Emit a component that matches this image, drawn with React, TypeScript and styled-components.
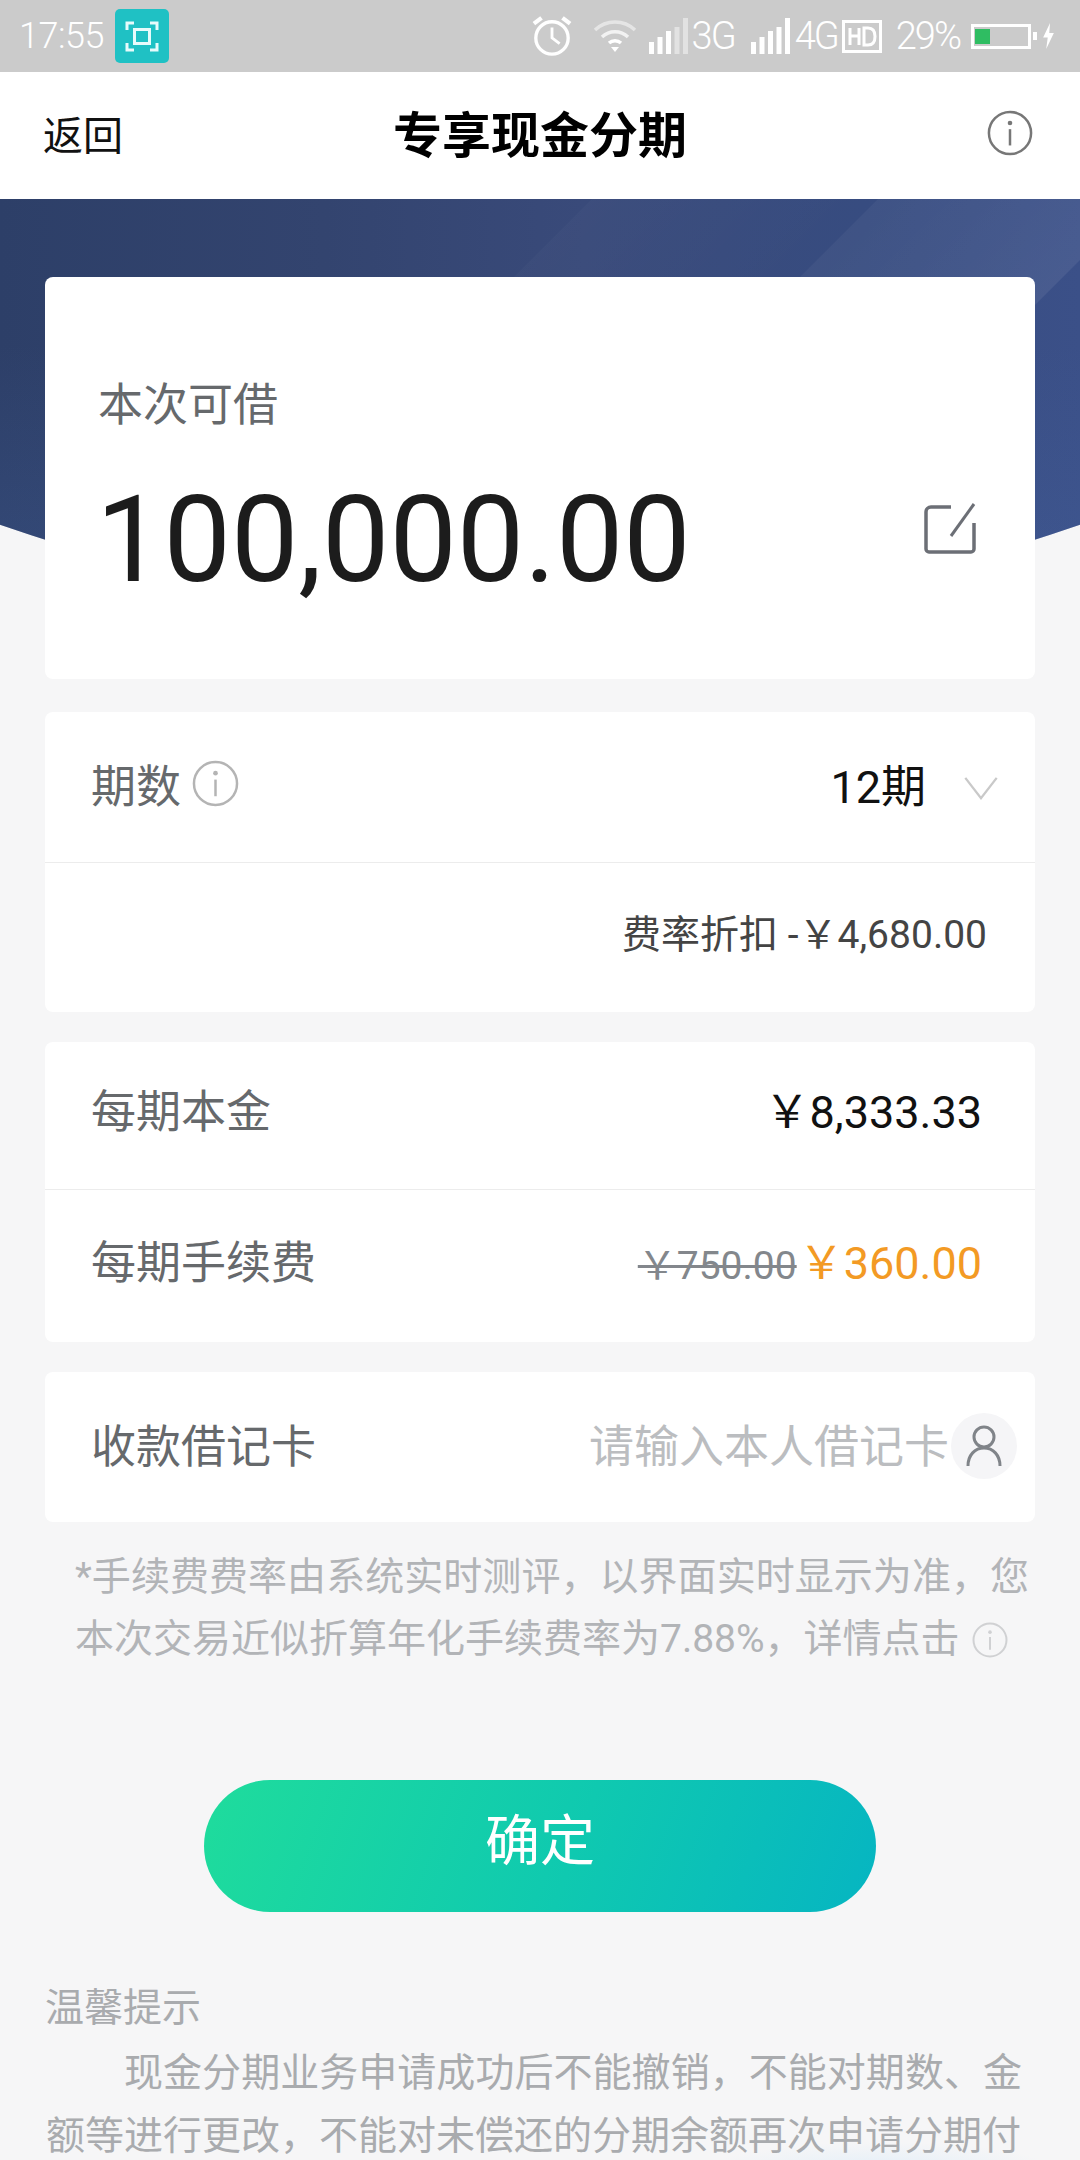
import styled, { createGlobalStyle } from 'styled-components'

const Global = createGlobalStyle`
    html, body {
        margin: 0;
        padding: 0;
        background: #f6f6f7;
    }
    * {
        box-sizing: border-box;
    }
`

const Page = styled.div`
    position: relative;
    width: 1080px;
    height: 2160px;
    overflow: hidden;
    background: radial-gradient(ellipse 170px 26px at 880px 2168px, #e4eff8, rgba(228, 239, 248, 0)), #f6f6f7;
    font-family: Roboto, "Noto Sans CJK SC", sans-serif;
`

const StatusBar = styled.div`
    height: 72px;
    background: #cbcbcb;
    display: flex;
    align-items: center;
    padding: 0 25px 0 19px;
    color: #fff;
`

const Clock = styled.span`
    font-size: 36px;
    font-weight: 300;
    letter-spacing: -0.5px;
`

const ScanBadge = styled.div`
    width: 54px;
    height: 54px;
    margin-left: 11px;
    border-radius: 5px;
    background: #1fc1c4;
    display: flex;
    align-items: center;
    justify-content: center;
`

const StatusRight = styled.div`
    margin-left: auto;
    display: flex;
    align-items: center;
`

const StatusIcon = styled.svg<{ $ml?: number }>`
    display: block;
    flex: none;
    margin-left: ${props => props.$ml || 0}px;
`

const NetLabel = styled.span<{ $ml: number }>`
    margin-left: ${props => props.$ml}px;
    font-size: 38px;
    line-height: 1;
    font-weight: 300;
    letter-spacing: -2px;
`

const Percent = styled.span`
    margin: 0 11px 0 14px;
    font-size: 38px;
    line-height: 1;
    font-weight: 300;
    letter-spacing: -2px;
`

const NavBar = styled.div`
    height: 127px;
    background: #fff;
    display: flex;
    align-items: center;
    justify-content: space-between;
    padding: 0 47px 5px 43px;
    position: relative;
    z-index: 1;
`

const BackLink = styled.span`
    font-size: 40px;
    color: #111;
    width: 120px;
`

const Title = styled.h1`
    margin: 0 0 3px 4px;
    font-size: 49px;
    font-weight: 700;
    color: #000;
`

const NavAction = styled.div`
    width: 120px;
    display: flex;
    justify-content: flex-end;
`

const Hero = styled.div`
    position: absolute;
    top: 199px;
    left: 0;
    width: 1080px;
    height: 417px;
    overflow: hidden;
    clip-path: circle(1645px at 540px -1228px);
    background:
        linear-gradient(180deg, rgba(70, 100, 160, 0) 35%, rgba(70, 100, 160, 0.25) 85%),
        linear-gradient(90deg, #2d3f68 0%, #33446f 30%, #394a7a 54%, #374c80 80%, #3b5088 100%);

    &::before {
        content: "";
        position: absolute;
        top: 0;
        left: 592px;
        width: 286px;
        height: 100%;
        transform-origin: top left;
        transform: skewX(-45deg);
        background: linear-gradient(90deg, rgba(255, 255, 255, 0.02), rgba(255, 255, 255, 0));
    }

    &::after {
        content: "";
        position: absolute;
        top: 0;
        left: 878px;
        width: 263px;
        height: 100%;
        transform-origin: top left;
        transform: skewX(-45deg);
        background: linear-gradient(90deg, rgba(255, 255, 255, 0.04), rgba(255, 255, 255, 0.07));
    }
`

const Content = styled.div`
    position: relative;
    padding: 78px 45px 0;
    display: flex;
    flex-direction: column;
`

const AmountCard = styled.div`
    height: 402px;
    background: #fff;
    border-radius: 8px;
    padding: 99px 59px 0 53px;
`

const AmountLabel = styled.div`
    font-size: 45px;
    line-height: 60px;
    color: #66696c;
`

const AmountRow = styled.div`
    display: flex;
    align-items: center;
    justify-content: space-between;
    margin: 34px 0 0 -2px;
`

const Amount = styled.div`
    font-size: 120px;
    line-height: 140px;
    color: #1c1c1c;
`

const EditIcon = styled.svg`
    margin-bottom: 22px;
`

const Section = styled.div<{ $mt: number }>`
    margin-top: ${props => props.$mt}px;
    background: #fff;
    border-radius: 8px;
`

const Row = styled.div<{ $h: number; $pb: number; $line?: boolean }>`
    height: ${props => props.$h}px;
    display: flex;
    align-items: center;
    justify-content: space-between;
    padding: 0 53px ${props => props.$pb}px 46px;
    border-bottom: ${props => (props.$line ? '1px solid #ececec' : 'none')};
`

const DiscountRow = styled(Row)`
    justify-content: flex-end;
    padding-right: 48px;
`

const Label = styled.div`
    display: flex;
    align-items: center;
    gap: 11px;
    font-size: 45px;
    color: #66696c;
`

const PeriodValue = styled.div`
    display: flex;
    align-items: center;
    gap: 38px;
    margin-right: -16px;
    font-size: 45px;
    color: #111;
`

const Chevron = styled.svg`
    margin-top: 8px;
`

const Discount = styled.div`
    font-size: 39px;
    color: #444;
`

const Money = styled.div`
    font-size: 45px;
    color: #111;
`

const OldPrice = styled.span`
    font-size: 39px;
    color: #83878c;
    text-decoration: line-through;
`

const NewPrice = styled.span`
    margin-left: 2px;
    font-size: 45px;
    color: #f39a24;
`

const Placeholder = styled.div`
    display: flex;
    align-items: center;
    margin-right: -35px;
    font-size: 45px;
    color: #bbbdc0;
`

const AvatarCircle = styled.div`
    width: 66px;
    height: 66px;
    margin: 4px 0 0 2px;
    border-radius: 50%;
    background: #f5f5f7;
    display: flex;
    align-items: center;
    justify-content: center;
`

const Note = styled.p`
    margin: 24px 6px 0 30px;
    font-size: 39px;
    line-height: 62px;
    color: #b2b4b7;
    text-align: justify;
`

const NoteIcon = styled.span`
    display: inline-block;
    vertical-align: -6px;
    margin-left: 12px;
`

const ConfirmButton = styled.button`
    align-self: center;
    width: 672px;
    height: 132px;
    margin-top: 104px;
    border: 0;
    border-radius: 66px;
    background: linear-gradient(110deg, #1fdc9c 0%, #0fc9b0 55%, #06b5c2 100%);
    color: #fff;
    font-family: inherit;
    font-size: 55px;
    padding: 0 0 20px;
`

const TipsTitle = styled.div`
    margin-top: 71px;
    font-size: 39px;
    line-height: 50px;
    color: #a9abae;
`

const TipsBody = styled.p`
    margin: 9px 13px 0 1px;
    font-size: 39px;
    line-height: 63px;
    color: #a9abae;
    text-indent: 2em;
    text-align: justify;
`

const InfoIcon = ({ size, color, width = 2 }: { size: number; color: string; width?: number }) => (
    <svg width={size} height={size} viewBox="0 0 48 48" fill="none" stroke={color} strokeWidth={width * 48 / size}>
        <circle cx="24" cy="24" r="22" />
        <circle cx="24" cy="13.5" r="2.4" fill={color} stroke="none" />
        <path d="M24 20v17" />
    </svg>
)

const SignalBars = ({ dim, ml }: { dim?: boolean; ml: number }) => (
    <StatusIcon $ml={ml} width="39" height="36" viewBox="0 0 39 36" fill="#fff">
        <rect x="0" y="24" width="5" height="12" />
        <rect x="8.5" y="19" width="5" height="17" />
        <rect x="17" y="13" width="5" height="23" />
        <rect x="25.5" y="9" width="5" height="27" opacity={dim ? 0.45 : 1} />
        <rect x="34" y="0" width="5" height="36" opacity={dim ? 0.45 : 1} />
    </StatusIcon>
)

export default function App() {
    return (
        <Page>
            <Global />
            <StatusBar>
                <Clock>17:55</Clock>
                <ScanBadge>
                    <svg width="34" height="31" viewBox="0 0 34 31" fill="none" stroke="#e6fbfb" strokeWidth="3">
                        <path d="M9 2H2v7M25 2h7v7M9 29H2v-7M25 29h7v-7" />
                        <rect x="9.5" y="8.5" width="15" height="14" />
                    </svg>
                </ScanBadge>
                <StatusRight>
                    <StatusIcon width="42" height="40" viewBox="0 0 44 42" fill="none" stroke="#fff" strokeWidth="3.5">
                        <circle cx="22" cy="23" r="17" />
                        <path d="M22 12v11l8 6" strokeWidth="3" />
                        <path d="M3 8l8-6M41 8l-8-6" strokeWidth="4.5" />
                    </StatusIcon>
                    <StatusIcon $ml={20} width="44" height="34" viewBox="0 0 44 34" fill="none" stroke="#fff">
                        <path d="M2 11a29 29 0 0 1 40 0" strokeWidth="3.5" opacity="0.5" />
                        <path d="M9 18a19 19 0 0 1 26 0" strokeWidth="3.5" opacity="0.75" />
                        <path d="M16 24a9 9 0 0 1 12 0" strokeWidth="3.5" />
                        <path d="M18 28h8l-4 5z" fill="#fff" stroke="none" />
                    </StatusIcon>
                    <SignalBars dim ml={12} />
                    <NetLabel $ml={4}>3G</NetLabel>
                    <SignalBars ml={16} />
                    <NetLabel $ml={5}>4G</NetLabel>
                    <StatusIcon $ml={4} width="40" height="33" viewBox="0 0 40 33">
                        <rect x="1.5" y="1.5" width="37" height="30" fill="none" stroke="#fff" strokeWidth="3" />
                        <path d="M8 8v17M8 16h9M17 8v17M22 8v17h4q7 0 7-8.500t-7-8.500z" fill="none" stroke="#fff" strokeWidth="3" />
                    </StatusIcon>
                    <Percent>29%</Percent>
                    <StatusIcon width="66" height="25" viewBox="0 0 66 25">
                        <rect x="1.500" y="1.500" width="57" height="22" fill="none" stroke="#fff" strokeWidth="3" />
                        <rect x="4" y="5" width="15" height="15" fill="#2fbd62" />
                        <rect x="62" y="8" width="4" height="8" fill="#fff" />
                    </StatusIcon>
                    <StatusIcon $ml={5} width="13" height="26" viewBox="0 0 14 34" fill="#fff">
                        <path d="M9 0L0 19h6l-2 15 10-21H8z" />
                    </StatusIcon>
                </StatusRight>
            </StatusBar>
            <NavBar>
                <BackLink>返回</BackLink>
                <Title>专享现金分期</Title>
                <NavAction><InfoIcon size={46} color="#777" width={2.5} /></NavAction>
            </NavBar>
            <Hero />
            <Content>
                <AmountCard>
                    <AmountLabel>本次可借</AmountLabel>
                    <AmountRow>
                        <Amount>100,000.00</Amount>
                        <EditIcon width="52" height="52" viewBox="0 0 52 52" fill="none" stroke="#6c6f76" strokeWidth="3.5">
                            <path d="M27 4H7a5 5 0 0 0-5 5v37a3 3 0 0 0 3 3h42a3 3 0 0 0 3-3V20" />
                            <path d="M50 1L27 33" strokeWidth="3" />
                        </EditIcon>
                    </AmountRow>
                </AmountCard>
                <Section $mt={33}>
                    <Row $h={151} $pb={7} $line>
                        <Label>期数<InfoIcon size={47} color="#b4b4b4" width={2.5} /></Label>
                        <PeriodValue>
                            12期
                            <Chevron width="34" height="24" viewBox="0 0 36 26" fill="none" stroke="#c9c9c9" strokeWidth="2.5">
                                <path d="M1 2l17 22L35 2" />
                            </Chevron>
                        </PeriodValue>
                    </Row>
                    <DiscountRow $h={149} $pb={13}>
                        <Discount>费率折扣 -￥4,680.00</Discount>
                    </DiscountRow>
                </Section>
                <Section $mt={30}>
                    <Row $h={148} $pb={14} $line>
                        <Label>每期本金</Label>
                        <Money>￥8,333.33</Money>
                    </Row>
                    <Row $h={152} $pb={13}>
                        <Label>每期手续费</Label>
                        <div>
                            <OldPrice>￥750.00</OldPrice>
                            <NewPrice>￥360.00</NewPrice>
                        </div>
                    </Row>
                </Section>
                <Section $mt={30}>
                    <Row $h={150} $pb={7}>
                        <Label>收款借记卡</Label>
                        <Placeholder>
                            请输入本人借记卡
                            <AvatarCircle>
                                <svg width="36" height="44" viewBox="0 0 36 44" fill="none" stroke="#808489" strokeWidth="3">
                                    <circle cx="18" cy="13" r="10" />
                                    <path d="M2 42c0-11 7-18 16-18s16 7 16 18" />
                                </svg>
                            </AvatarCircle>
                        </Placeholder>
                    </Row>
                </Section>
                <Note>
                    *手续费费率由系统实时测评，以界面实时显示为准，您本次交易近似折算年化手续费率为7.88%，详情点击
                    <NoteIcon><InfoIcon size={36} color="#d0d1d3" /></NoteIcon>
                </Note>
                <ConfirmButton>确定</ConfirmButton>
                <TipsTitle>温馨提示</TipsTitle>
                <TipsBody>现金分期业务申请成功后不能撤销，不能对期数、金额等进行更改，不能对未偿还的分期余额再次申请分期付</TipsBody>
            </Content>
        </Page>
    )
}
